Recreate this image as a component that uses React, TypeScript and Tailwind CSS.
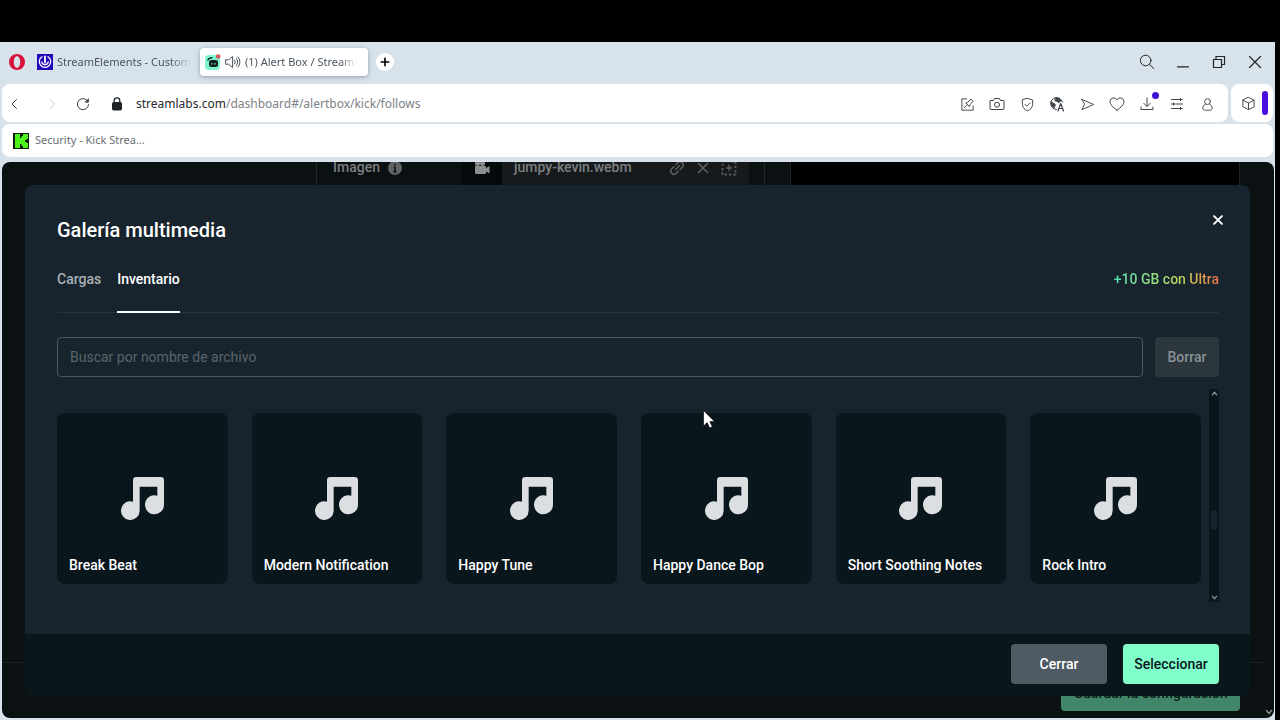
import type { ReactNode } from "react";

const sounds = [
  "Break Beat",
  "Modern Notification",
  "Happy Tune",
  "Happy Dance Bop",
  "Short Soothing Notes",
  "Rock Intro",
];

function Icon({ children, className = "size-4" }: { children: ReactNode; className?: string }) {
  return (
    <svg
      viewBox="0 0 16 16"
      fill="none"
      stroke="currentColor"
      strokeLinecap="round"
      strokeLinejoin="round"
      className={className}
      aria-hidden="true"
    >
      {children}
    </svg>
  );
}

function IconButton({ label, children, className = "" }: { label: string; children: ReactNode; className?: string }) {
  return (
    <button type="button" aria-label={label} className={`flex size-5 items-center justify-center ${className}`}>
      {children}
    </button>
  );
}

function TabStrip() {
  return (
    <div className="flex h-[42px] shrink-0 items-center pr-2.5 pb-0.5 pl-[7px] text-[11px] text-[#4a5560]">
      <button type="button" aria-label="Opera" className="flex size-5 items-center justify-center">
        <svg viewBox="0 0 16 16" className="size-4" aria-hidden="true">
          <path
            fill="#d8123a"
            fillRule="evenodd"
            d="M8 0a8 8 0 1 0 0 16A8 8 0 0 0 8 0zM8 2.2c1.9 0 3.2 2.5 3.2 5.8s-1.3 5.8-3.2 5.8S4.8 11.300 4.800 8 6.100 2.200 8 2.200z"
          />
        </svg>
      </button>
      <button type="button" className="ml-[10px] flex w-[155px] items-center gap-1 whitespace-nowrap">
        <svg viewBox="0 0 16 16" className="size-4 shrink-0" aria-hidden="true">
          <rect width="16" height="16" fill="#2208b8" />
          <g fill="none" stroke="#fff" strokeWidth="1.300" strokeLinecap="round">
            <path d="M5 2.800a5.700 5.700 0 1 0 6 0" />
            <path d="M8 2.500v6" strokeWidth="1.800" />
            <path d="M4.800 8c.3 1.700 1.600 2.700 3.200 2.700s2.900-1 3.200-2.700" />
          </g>
        </svg>
        <span className="overflow-hidden [mask-image:linear-gradient(to_right,#000_85%,transparent)]">
          StreamElements - Custom
        </span>
      </button>
      <button
        type="button"
        className="ml-2 flex h-7 w-[168px] items-center rounded-[4px] bg-white pr-2 pl-[5px] whitespace-nowrap shadow-[0_1px_4px_rgba(60,80,100,0.45)]"
      >
        <svg viewBox="0 0 16 16" className="size-4 shrink-0" aria-hidden="true">
          <rect y="1" width="15" height="15" rx="4" fill="#7df5d0" />
          <path d="M2.500 6.500C3.500 4.500 5 3.600 7.500 3.600" fill="none" stroke="#10211d" strokeWidth="1.200" />
          <rect x="4" y="6" width="9" height="7" rx="2.500" fill="#10211d" />
          <path d="M7 9v1.600M10 9v1.600" stroke="#7df5d0" strokeWidth="1" />
          <circle cx="13.200" cy="2.500" r="2.300" fill="#e0525e" />
        </svg>
        <Icon className="ml-1 size-4 shrink-0">
          <path d="M1 5.800h2.600L7.600 2.500v11L3.600 10.200H1z" />
          <path d="M9.600 6a3 3 0 0 1 0 4M11.300 4.300a5.300 5.300 0 0 1 0 7.400M13 2.800a7.600 7.600 0 0 1 0 10.400" />
        </Icon>
        <span className="ml-1 overflow-hidden [mask-image:linear-gradient(to_right,#000_85%,transparent)]">
          (1) Alert Box / Streaml
        </span>
      </button>
      <button
        type="button"
        aria-label="Nueva pestaña"
        className="ml-2 flex size-[18px] items-center justify-center rounded-full bg-white text-black"
      >
        <Icon className="size-3">
          <path d="M8 3v10M3 8h10" strokeWidth="2.200" />
        </Icon>
      </button>
      <div className="ml-auto flex gap-4 text-[#20262c]">
        <IconButton label="Buscar">
          <Icon>
            <circle cx="6.700" cy="6.500" r="5.300" />
            <path d="M10.600 10.400l4.300 4.200" />
          </Icon>
        </IconButton>
        <IconButton label="Minimizar">
          <Icon>
            <path d="M2.500 12.800h11" strokeWidth="1.300" />
          </Icon>
        </IconButton>
        <IconButton label="Restaurar">
          <Icon>
            <path d="M2.500 5.500h8v8h-8zM5 5.500v-3h8.500v8h-3" strokeWidth="1.200" strokeLinejoin="miter" />
          </Icon>
        </IconButton>
        <IconButton label="Cerrar ventana">
          <Icon>
            <path d="M2.500 2.500l11 11M13.500 2.500l-11 11" strokeWidth="1.200" />
          </Icon>
        </IconButton>
      </div>
    </div>
  );
}

function Toolbar() {
  return (
    <div className="flex h-[38px] shrink-0 gap-[3px] pr-0.5 pl-0.5">
      <div className="flex flex-1 items-center rounded-lg bg-white pt-0.5 pr-[11px] pl-[3px] text-[#3c4248]">
        <IconButton label="Atrás">
          <Icon>
            <path d="M9.500 3.500L5 8l4.500 4.500" />
          </Icon>
        </IconButton>
        <IconButton label="Adelante" className="ml-[17px] text-[#c3c7ca]">
          <Icon>
            <path d="M6 3.500L10.500 8 6 12.500" />
          </Icon>
        </IconButton>
        <IconButton label="Recargar" className="ml-[11px]">
          <Icon>
            <path d="M13 5.600A5.600 5.600 0 1 0 13.600 8.600" />
            <path d="M13.600 2.800v3.400h-3.400z" fill="currentColor" strokeWidth=".6" />
          </Icon>
        </IconButton>
        <Icon className="ml-4 size-4 text-[#1f2428]">
          <rect x="3.500" y="6.500" width="9" height="7.500" rx="1" fill="currentColor" />
          <path d="M5.200 6.500V4.600a2.800 2.800 0 0 1 5.600 0v1.900" strokeWidth="1.300" />
        </Icon>
        <a href="#follows" className="ml-[11px] text-[12px] whitespace-nowrap text-[#7c8287]">
          <span className="text-[#25292d]">streamlabs.com</span>/dashboard#/alertbox/kick/follows
        </a>
        <div className="ml-auto flex gap-[10px]">
          <IconButton label="Editar página">
            <Icon className="size-[15px]">
              <path d="M7 2H2v12h12V9.500" />
              <path d="M4.500 11.500l3.200-3.400M6.400 6.600l3.600 3.600.5-2.100 3.500-3.400-2.500-2.600-3.300 3.700z" />
            </Icon>
          </IconButton>
          <IconButton label="Instantánea">
            <Icon>
              <path d="M2 4.500h2.500l1-2h5l1 2H14a1 1 0 0 1 1 1V12.500a1 1 0 0 1-1 1H2a1 1 0 0 1-1-1v-7a1 1 0 0 1 1-1z" />
              <circle cx="8" cy="8.700" r="2.500" />
            </Icon>
          </IconButton>
          <IconButton label="Bloqueador">
            <Icon className="size-[15px]">
              <path d="M8 1.500L13.500 3.200v4.600c0 3-2 5.400-5.500 6.900-3.500-1.500-5.500-3.900-5.500-6.900V3.200z" />
              <path d="M5.400 7.900l1.900 1.900 3.500-3.600" />
            </Icon>
          </IconButton>
          <IconButton label="Traducir">
            <Icon>
              <path d="M13.500 6A6 6 0 1 0 7.500 13.600" />
              <path d="M2 6c2 .3 2.600 1.500 3.800 1.700C7 8 6 10 5.500 12 3 11 1.500 8.500 2 6zM6.500 1.800C9 1.500 11.500 3 12.500 5c-1.500.6-2 .6-2.500 2L8 5.500 6 5z" fill="currentColor" strokeWidth=".6" />
              <path d="M9 15l2.700-7.500L14.500 15M10 12.500h3.500" strokeWidth="1.200" />
            </Icon>
          </IconButton>
          <IconButton label="Enviar a Flow">
            <Icon className="size-[15px]">
              <path d="M2 2.500L14.500 8 2 13.500 4.700 8z" />
            </Icon>
          </IconButton>
          <IconButton label="Favoritos">
            <Icon>
              <path d="M8 14.200C3.500 11 1 8.500 1 5.600a3.700 3.700 0 0 1 7-1.700 3.700 3.700 0 0 1 7 1.700c0 2.900-2.500 5.400-7 8.600z" />
            </Icon>
          </IconButton>
          <div className="relative">
            <IconButton label="Descargas">
              <Icon>
                <path d="M8 2v8.300M4.800 7.300L8 10.500l3.200-3.200M2 11v2.500h12V11" />
              </Icon>
            </IconButton>
            <span className="absolute -top-0.5 -right-[2px] size-[7px] rounded-full bg-[#3f0fd2]" />
          </div>
          <IconButton label="Configuración rápida">
            <Icon>
              <path d="M2.500 3.500h11M2.500 8h11M2.500 12.500h11M11.500 2.500v2M4.500 7v2M11.500 11.500v2" />
            </Icon>
          </IconButton>
          <IconButton label="Perfil">
            <Icon className="size-[15px]">
              <circle cx="8" cy="4.900" r="3.100" />
              <path d="M5.800 7.500C3.800 8.600 3 10.200 3 12c0 1.500 1 2.200 5 2.200s5-.7 5-2.200c0-1.800-.8-3.400-2.800-4.500" />
            </Icon>
          </IconButton>
        </div>
      </div>
      <div className="flex w-[42px] items-center justify-between rounded-lg bg-white pr-[5px] pl-[7px] text-[#3c4248]">
        <IconButton label="Extensiones">
          <Icon className="size-[15px]">
            <path d="M8 1.500l6 3v7l-6 3-6-3v-7zM2 4.500l6 3 6-3M8 7.500v7" />
          </Icon>
        </IconButton>
        <span className="h-6 w-1.5 rounded-full bg-[#4a0fdc]" />
      </div>
    </div>
  );
}

function Bookmarks() {
  return (
    <div className="mx-0.5 mt-0.5 flex h-[33px] shrink-0 items-center rounded-lg bg-white pl-[11px]">
      <a href="#security" className="flex items-center gap-1.5 text-[11px] text-[#686e73]">
        <svg viewBox="0 0 16 16" className="size-4" aria-hidden="true">
          <rect width="16" height="16" fill="#0c1a0a" />
          <path
            fill="#4cf21c"
            d="M2 1h5v4h1.500V3H10V1h5v5h-1.500v1H12v2h1.500v1H15v5h-5v-2H8.500v-2H7v4H2z"
          />
        </svg>
        Security - Kick Strea...
      </a>
    </div>
  );
}

function AlertSettings() {
  return (
    <div aria-hidden="true" className="flex min-h-0 flex-1 flex-col justify-between">
      <div className="flex h-6 overflow-hidden text-[14px] font-medium text-[#7b7f81]">
        <div className="ml-[314px] flex w-[449px] border-x border-[#202628]">
          <div className="flex h-[11px] w-[145px] items-center gap-2 pl-4">
            Imagen
            <svg viewBox="0 0 16 16" className="size-3.5" aria-hidden="true">
              <circle cx="8" cy="8" r="8" fill="#606466" />
              <path d="M8 3.200v2M8 6.800v5.500M6.500 7h1.500M6.300 12.300h3.400" stroke="#0b0f11" strokeWidth="1.800" />
            </svg>
          </div>
          <div className="flex w-10 justify-center bg-[#04090b]">
            <svg viewBox="0 0 16 16" className="-mt-0.5 size-4" fill="#8b8e90" aria-hidden="true">
              <circle cx="3.500" cy="3.500" r="2.500" />
              <circle cx="8.500" cy="3.500" r="2.500" />
              <path d="M1 6h10a1 1 0 0 1 1 1v1L15.500 6v7.500L12 11.500V13a1 1 0 0 1-1 1H2a1 1 0 0 1-1-1z" />
            </svg>
          </div>
          <div className="flex w-[247px] bg-[#161a1c] pr-3 pl-3">
            <div className="flex h-[11px] flex-1 items-center gap-2.5">
              <span className="flex-1">jumpy-kevin.webm</span>
              <Icon className="size-4 text-[#5b5f61]">
                <path d="M6.500 9.500l4-4M7 4.500l2-2a3.200 3.200 0 0 1 4.500 4.500l-2.500 2.500M9 11.500l-2 2A3.200 3.200 0 0 1 2.500 9L5 6.500" strokeWidth="1.600" />
              </Icon>
              <Icon className="size-4 text-[#5b5f61]">
                <path d="M3.500 3.500l9 9M12.500 3.500l-9 9" strokeWidth="1.600" />
              </Icon>
              <Icon className="size-4 text-[#5b5f61]">
                <rect x="1.500" y="1.500" width="13" height="13" strokeWidth="1.800" strokeDasharray="2.200 2.133" strokeLinecap="butt" />
                <path d="M8 5.500v5M5.500 8h5" strokeWidth="1.500" />
              </Icon>
            </div>
          </div>
        </div>
        <div className="mr-[34px] ml-[25px] flex-1 border-x border-[#202628] bg-black" />
      </div>
      <div className="mr-[10px] border-t border-[#1c2122] pt-3">
        <div className="mr-6 mb-[7px] ml-auto flex h-9 w-[179px] items-center justify-center rounded-[4px] bg-[#42866a] text-[14px] font-medium text-[#0b201a]">
          Guardar la configuración
        </div>
      </div>
    </div>
  );
}

function MusicIcon() {
  return (
    <svg viewBox="0 0 129 129" className="size-[43px]" fill="#dcdfe1" aria-hidden="true">
      <path d="M46 0H119a10 10 0 0 1 10 10V83a28.500 28.500 0 1 1-20-27V29H56V101a28 28 0 1 1-20-27V10A10 10 0 0 1 46 0z" />
    </svg>
  );
}

function MediaGallery() {
  return (
    <section
      role="dialog"
      aria-labelledby="gallery-title"
      className="absolute inset-x-[23px] top-[23px] bottom-[22px] mr-px flex flex-col overflow-hidden rounded-lg bg-[#18242d]"
    >
      <div className="flex flex-1 flex-col pr-[31px] pl-8">
        <header className="flex items-start justify-between pt-7">
          <h1 id="gallery-title" className="mt-1 text-[20px] leading-[26px] font-medium text-white">
            Galería multimedia
          </h1>
          <button type="button" aria-label="Cerrar galería" className="-mr-1.5 text-white">
            <Icon className="size-[14px]">
              <path d="M3.500 3.500l9 9M12.500 3.500l-9 9" strokeWidth="2.200" />
            </Icon>
          </button>
        </header>
        <nav className="mt-[26px] flex h-[44px] items-stretch justify-between border-b border-[#27343b] text-[14px] leading-5 font-medium">
          <div className="flex gap-4">
            <button type="button" className="flex items-start text-[#a9b1b5]">
              Cargas
            </button>
            <button type="button" className="-mb-px flex items-start border-b-2 border-white text-white">
              Inventario
            </button>
          </div>
          <a
            href="#ultra"
            className="self-start bg-linear-to-r from-[#4fe3b5] via-[#b5dc5c] via-60% to-[#e8714a] bg-clip-text text-transparent"
          >
            +10 GB con Ultra
          </a>
        </nav>
        <form className="mt-6 flex gap-3 text-[14px]">
          <input
            type="text"
            aria-label="Buscar por nombre de archivo"
            placeholder="Buscar por nombre de archivo"
            className="h-10 min-w-0 flex-1 rounded-[4px] border border-[#4b575d] bg-transparent px-3 text-white outline-none placeholder:text-[#59646a]"
          />
          <button type="button" className="h-10 w-16 rounded-[4px] bg-[#2b363d] font-medium text-[#899196]">
            Borrar
          </button>
        </form>
        <div className="mt-3 flex h-[213px] gap-2">
          <ul className="grid flex-1 grid-cols-6 items-start gap-6 pt-6">
            {sounds.map((name) => (
              <li key={name}>
                <button
                  type="button"
                  className="relative flex aspect-square w-full items-center justify-center rounded-lg bg-[#09161c]"
                >
                  <MusicIcon />
                  <span className="absolute bottom-[9px] left-3 text-[14px] leading-5 font-medium text-white">{name}</span>
                </button>
              </li>
            ))}
          </ul>
          <div className="flex w-[10px] flex-col items-center bg-[#09161c] text-[#8a9295]">
            <Icon className="mt-px size-[7px]">
              <path d="M3 11l5-6 5 6" strokeWidth="3" />
            </Icon>
            <span className="mt-[113px] h-5 w-1.5 rounded-full bg-[#18242d]" />
            <Icon className="mt-auto mb-px size-[7px]">
              <path d="M3 5l5 6 5-6" strokeWidth="3" />
            </Icon>
          </div>
        </div>
      </div>
      <footer className="flex h-[62px] shrink-0 justify-end gap-4 bg-[#09161a] pt-2.5 pr-[31px] pl-8 text-[14px] font-medium">
        <button type="button" className="h-10 w-24 rounded-[4px] bg-[#4f5b62] text-white">
          Cerrar
        </button>
        <button type="button" className="h-10 w-24 rounded-[4px] bg-[#80ffca] text-[#09161d]">
          Seleccionar
        </button>
      </footer>
    </section>
  );
}

export default function App() {
  return (
    <div className="flex h-screen flex-col overflow-hidden bg-black pt-[42px] pr-[5px] font-['Noto_Sans',sans-serif]">
      <div className="flex min-h-0 flex-1 flex-col bg-[#d8e2eb]">
        <TabStrip />
        <Toolbar />
        <Bookmarks />
        <main className="relative mt-[5px] mr-px mb-0.5 ml-0.5 flex min-h-0 flex-1 overflow-hidden rounded-lg bg-[#0b1012] font-[Roboto,sans-serif]">
          <AlertSettings />
          <div aria-hidden="true" className="absolute right-0 bottom-0 flex w-2.5 justify-center pb-0.5 text-[#8a9295]">
            <Icon className="size-2">
              <path d="M3 5l5 6 5-6" strokeWidth="2.500" />
            </Icon>
          </div>
          <MediaGallery />
          <svg viewBox="0 0 12 19" className="absolute top-[248px] left-[701px] h-[19px] w-3" aria-hidden="true">
            <path d="M.5.500v15.500l3.700-3.400 2.400 5.400 2.700-1.200-2.400-5.200h4.700z" fill="#fff" stroke="#0b1012" strokeWidth=".7" />
          </svg>
        </main>
      </div>
    </div>
  );
}
